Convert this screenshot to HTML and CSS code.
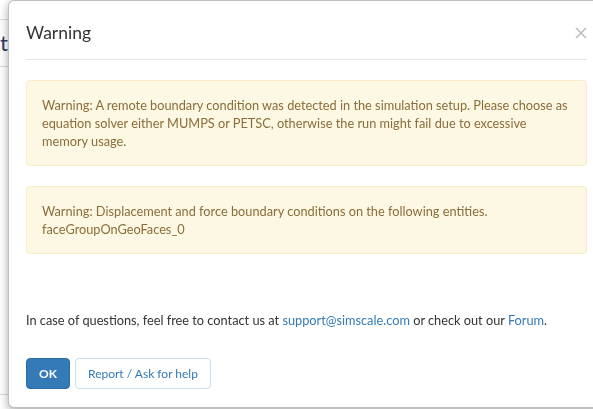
FILE: index.html
```html
<!DOCTYPE html>
<html>
<head>
<meta charset="utf-8">
<link rel="stylesheet" href="styles.css">
</head>
<body>
<div class="page">
  <div class="page-top"></div>
  <div class="page-row"><span class="page-title">t</span></div>
  <div class="page-fill"></div>
  <div class="page-bottom"></div>
</div>
<div class="modal">
  <div class="modal-header">
    <h4 class="modal-title">Warning</h4>
    <button class="close" aria-label="Close">
      <svg width="12" height="12" viewBox="0 0 12 12"><path d="M1 1 L11 11 M11 1 L1 11" stroke="#bdbdbd" stroke-width="1.6" fill="none"/></svg>
    </button>
  </div>
  <div class="modal-body">
    <div class="alert">Warning: A remote boundary condition was detected in the simulation setup. Please choose as equation solver either MUMPS or PETSC, otherwise the run might fail due to excessive memory usage.</div>
    <div class="alert">Warning: Displacement and force boundary conditions on the following entities.<br>faceGroupOnGeoFaces_0</div>
    <p class="help">In case of questions, feel free to contact us at <a href="#">support@simscale.com</a> or check out our <a href="#">Forum</a>.</p>
  </div>
  <div class="modal-footer">
    <button class="btn btn-primary">OK</button>
    <button class="btn btn-default">Report / Ask for help</button>
  </div>
</div>
</body>
</html>
```

FILE: styles.css
```css
html, body {
  margin: 0;
  padding: 0;
  overflow: hidden;
  background: #ffffff;
  font-family: Lato, "Open Sans", sans-serif;
  font-size: 12.75px;
  color: #333333;
}

.page {
  height: 409px;
  display: flex;
  flex-direction: column;
}

.page-top {
  height: 19px;
  border-bottom: 1px solid #dddddd;
}

.page-row {
  height: 46px;
  border-bottom: 1px solid #dddddd;
  display: flex;
  align-items: center;
}

.page-title {
  font-size: 22px;
  color: #2b3e63;
  margin-left: 0;
  line-height: 1;
}

.page-fill {
  flex: 1;
  border-bottom: 1px solid #dddddd;
}

.page-bottom {
  height: 14px;
}

.modal {
  position: fixed;
  left: 8px;
  top: 0;
  width: 597px;
  box-sizing: border-box;
  background: #ffffff;
  border: 1px solid rgba(0, 0, 0, 0.25);
  border-radius: 6px;
  box-shadow: 0 3px 10px rgba(0, 0, 0, 0.35);
  padding: 0 17px;
}

.modal-header {
  height: 59px;
  border-bottom: 1px solid #e5e5e5;
  display: flex;
  align-items: center;
  justify-content: space-between;
  padding-top: 5px;
  box-sizing: border-box;
}

.modal-title {
  margin: 0;
  font-size: 17.5px;
  font-weight: 400;
  line-height: 20px;
  color: #333333;
}

.close {
  border: 0;
  background: transparent;
  padding: 0;
  margin-right: 0;
  display: flex;
  cursor: pointer;
}

.modal-body {
  padding-top: 20px;
}

.alert {
  background: #fcf8e3;
  border: 1px solid #faebcc;
  border-radius: 4px;
  color: #8a6d3b;
  padding: 15px;
  line-height: 18px;
  margin-bottom: 20px;
}

.help {
  margin: 57px 0 0;
  line-height: 18px;
  color: #333333;
}

.help a {
  color: #337ab7;
  text-decoration: none;
}

.modal-footer {
  display: flex;
  gap: 5px;
  padding: 29px 0 18px;
}

.btn {
  height: 31px;
  box-sizing: border-box;
  padding: 0 12px;
  border-radius: 4px;
  font-family: Lato, "Open Sans", sans-serif;
  font-size: 12px;
  line-height: 18px;
  cursor: pointer;
}

.btn-primary {
  background: #337ab7;
  border: 1px solid #2e6da4;
  color: #ffffff;
  font-weight: 700;
  width: 44px;
}

.btn-default {
  background: #ffffff;
  border: 1px solid #c9dfe9;
  color: #337ab7;
}
```
